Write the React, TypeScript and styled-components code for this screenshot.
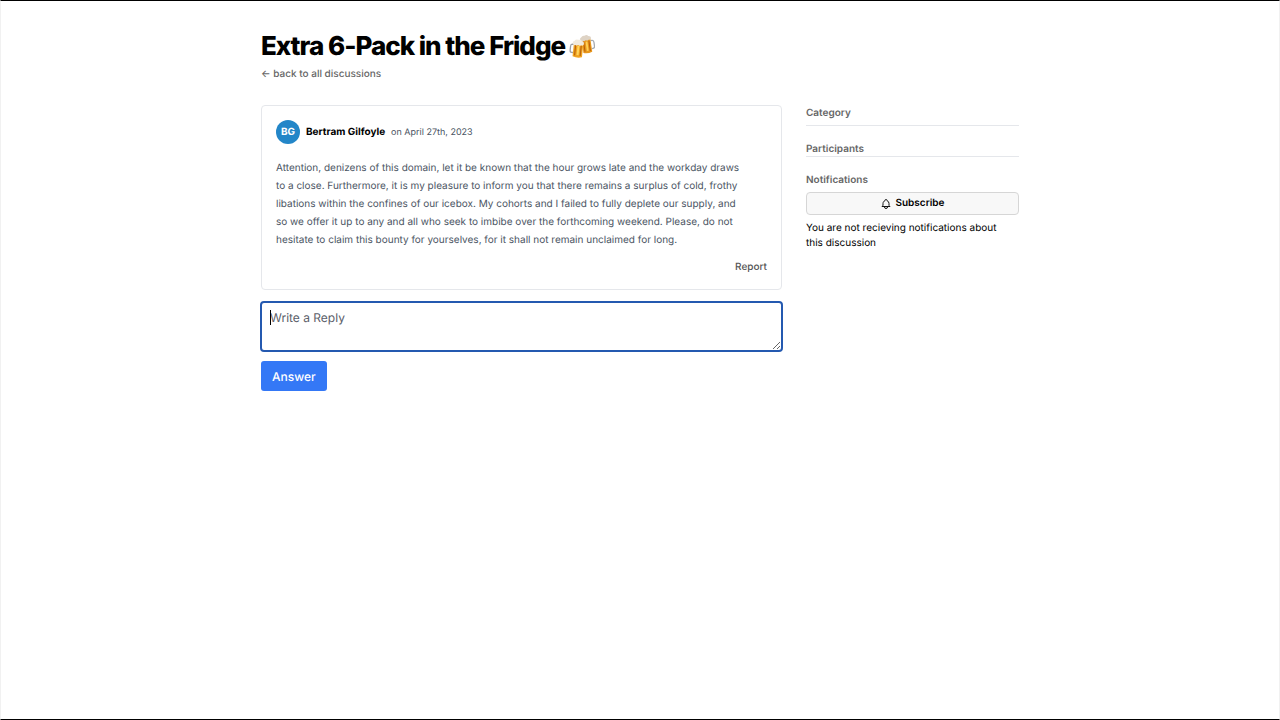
import React from "react";
import styled, { createGlobalStyle } from "styled-components";

const GlobalStyle = createGlobalStyle`
  *, *::before, *::after { box-sizing: border-box; }
  body {
    margin: 0;
    background: #fff;
    color: #000;
    font-family: Inter, "Liberation Sans", sans-serif;
    font-size: 10px;
    line-height: 15px;
    text-rendering: geometricPrecision;
  }
  button, textarea { font: inherit; color: inherit; text-rendering: inherit; }
`;

const Page = styled.div`
  min-height: 100vh;
  border: 1px solid #f1f1f1;
  border-top-color: #000;
  border-bottom-color: #000;
  padding: 30px 24px;
`;

const Container = styled.div`
  max-width: 758px;
  margin: 0 auto;
`;

const Title = styled.h1`
  display: flex;
  align-items: center;
  gap: 4px;
  margin: 0;
  font-size: 26px;
  line-height: 32px;
  font-weight: 800;
  letter-spacing: -1px;
`;

const BackLink = styled.a`
  display: block;
  width: fit-content;
  margin-top: 3px;
  color: #666;
  font-weight: 500;
  line-height: 16px;
  text-decoration: none;
`;

const Columns = styled.div`
  display: grid;
  grid-template-columns: minmax(0, 1fr) 213px;
  gap: 24px;
  margin-top: 23px;

  @media (max-width: 640px) {
    grid-template-columns: minmax(0, 1fr);
  }
`;

const Post = styled.article`
  border: 1px solid #e5e7eb;
  border-radius: 4px;
  padding: 14px;
`;

const PostHeader = styled.header`
  display: flex;
  align-items: center;
  gap: 6px;
`;

const Avatar = styled.span`
  display: grid;
  place-items: center;
  width: 24px;
  height: 24px;
  border-radius: 50%;
  background: #2386c8;
  color: #fff;
  font-weight: 700;
`;

const Author = styled.span`
  font-weight: 700;
`;

const PostDate = styled.time`
  color: #4b5563;
  font-size: 9px;
`;

const PostText = styled.p`
  margin: 15px 0 11px;
  padding-right: 22px;
  color: #4b5563;
  line-height: 18px;
`;

const PostFooter = styled.footer`
  display: flex;
  justify-content: flex-end;
`;

const ReportButton = styled.button`
  border: 0;
  padding: 0;
  background: none;
  color: #555;
  font-weight: 500;
  line-height: 15px;
  cursor: pointer;
`;

const ReplyForm = styled.form`
  margin: 11px -1px 0;
`;

const ReplyField = styled.div`
  position: relative;
`;

const ReplyBox = styled.textarea`
  display: block;
  width: 100%;
  height: 51px;
  padding: 6px 8px;
  border: 2px solid #2459b0;
  border-radius: 4px;
  outline: none;
  resize: vertical;
  background: #fff;
  font-size: 12px;
  line-height: 18px;

  &::placeholder { color: #5b6069; opacity: 1; }
  &:placeholder-shown { caret-color: transparent; }
`;

const Caret = styled.span`
  display: none;
  position: absolute;
  top: 9px;
  left: 10px;
  width: 1px;
  height: 15px;
  background: #000;
  pointer-events: none;

  ${ReplyBox}:placeholder-shown + & { display: block; }
`;

const AnswerButton = styled.button`
  margin: 9px 1px 0;
  height: 30px;
  padding: 0 11px;
  border: 0;
  border-radius: 3px;
  background: #3478f6;
  color: #fff;
  font-size: 12px;
  font-weight: 500;
  cursor: pointer;
`;

const SidePanel = styled.section<{ $space?: number }>`
  padding-bottom: ${(p) => p.$space ?? 0}px;
  margin-bottom: 15px;
  border-bottom: 1px solid #e5e7eb;

  &:last-child { border-bottom: 0; }
`;

const SideHeading = styled.h2`
  margin: 0;
  padding-top: 1px;
  color: #666;
  font-size: 10px;
  line-height: 14px;
  font-weight: 600;
`;

const SubscribeButton = styled.button`
  display: flex;
  align-items: center;
  justify-content: center;
  gap: 3px;
  width: 100%;
  height: 23px;
  margin: 5px 0 6px;
  border: 1px solid #d6d6d6;
  border-radius: 4px;
  background: #f8f8f8;
  font-weight: 600;
  cursor: pointer;
`;

const Note = styled.p`
  margin: 0;
  padding-right: 10px;
`;

const Mugs = () => (
  <svg width="26" height="26" viewBox="0 0 24 24" role="img" aria-label="Clinking beer mugs">
    <g transform="rotate(-8 17 10)">
      <path d="M20.500 6.500h1.300q1.500 0 1.500 2v3.500q0 2-1.500 2h-1.300" fill="none" stroke="#a5a9af" strokeWidth="1.200" />
      <path d="M12.300 4.500h8.200v12.500q-4.100 1.500-8.200 0z" fill="#e8971b" />
      <path d="M13.400 6.500h1v9.500h-1zM18.400 6.500h1v9.500h-1z" fill="#b9610c" />
      <path d="M15.700 7h1.700v8.500h-1.700z" fill="#ffcf55" />
      <path d="M11.400 5.600Q10.200 3.200 12.400 2.400q.9-1.800 3.100-1.100 2.200-1 3.400.7 2.500.3 2.200 2.500-.6 1.700-2.400 1-1.300 1-2.600.2-1.400 1-2.500.2-1.300.6-2.200-.3z" fill="#ded3c5" />
    </g>
    <g transform="rotate(6 8 14)">
      <path d="M4 10H2.700Q1.200 10 1.200 12v3.500q0 2 1.500 2H4" fill="none" stroke="#9b9fa5" strokeWidth="1.200" />
      <path d="M4 8.500h8.700V21q-4.300 1.500-8.700 0z" fill="#f0a31f" />
      <path d="M5.200 10.500h1.100V20H5.200zM10.400 10.500h1.100V20h-1.100z" fill="#bd650d" />
      <path d="M7.500 11h1.900v8.500H7.500z" fill="#ffd35c" />
      <path d="M3.300 10Q2.100 7.300 4.400 6.500q1-1.900 3.200-1.100 2.400-1 3.500.8 2.500.5 2.100 3-.8 1.700-2.500.8-1.200 1.100-2.600.2-1.300 1-2.500.2-1.400.6-2.300-.4z" fill="#f1eadd" />
    </g>
  </svg>
);

const Bell = () => (
  <svg width="12" height="12" viewBox="0 0 24 24" fill="none" stroke="#111" strokeWidth="2" strokeLinecap="round" strokeLinejoin="round" aria-hidden="true">
    <path d="M15 17h5l-1.405-1.405A2.032 2.032 0 0 1 18 14.158V11a6.002 6.002 0 0 0-4-5.659V5a2 2 0 1 0-4 0v.341C7.670 6.165 6 8.388 6 11v3.159c0 .538-.214 1.055-.595 1.436L4 17h5m6 0v1a3 3 0 1 1-6 0v-1m6 0H9" />
  </svg>
);

export default function App() {
  return (
    <>
      <GlobalStyle />
      <Page>
        <Container>
          <Title>
            Extra 6-Pack in the Fridge <Mugs />
          </Title>
          <BackLink href="#discussions">← back to all discussions</BackLink>
          <Columns>
            <main>
              <Post>
                <PostHeader>
                  <Avatar aria-hidden="true">BG</Avatar>
                  <Author>Bertram Gilfoyle</Author>
                  <PostDate dateTime="2023-04-27">on April 27th, 2023</PostDate>
                </PostHeader>
                <PostText>
                  Attention, denizens of this domain, let it be known that the hour grows late and the workday
                  draws to a close. Furthermore, it is my pleasure to inform you that there remains a surplus of
                  cold, frothy libations within the confines of our icebox. My cohorts and I failed to fully
                  deplete our supply, and so we offer it up to any and all who seek to imbibe over the forthcoming
                  weekend. Please, do not hesitate to claim this bounty for yourselves, for it shall not remain
                  unclaimed for long.
                </PostText>
                <PostFooter>
                  <ReportButton type="button">Report</ReportButton>
                </PostFooter>
              </Post>
              <ReplyForm onSubmit={(e) => e.preventDefault()}>
                <ReplyField>
                  <ReplyBox aria-label="Write a Reply" placeholder="Write a Reply" autoFocus />
                  <Caret aria-hidden="true" />
                </ReplyField>
                <AnswerButton type="submit">Answer</AnswerButton>
              </ReplyForm>
            </main>
            <aside>
              <SidePanel $space={5}>
                <SideHeading>Category</SideHeading>
              </SidePanel>
              <SidePanel>
                <SideHeading>Participants</SideHeading>
              </SidePanel>
              <SidePanel>
                <SideHeading>Notifications</SideHeading>
                <SubscribeButton type="button">
                  <Bell />
                  Subscribe
                </SubscribeButton>
                <Note>You are not recieving notifications about this discussion</Note>
              </SidePanel>
            </aside>
          </Columns>
        </Container>
      </Page>
    </>
  );
}
